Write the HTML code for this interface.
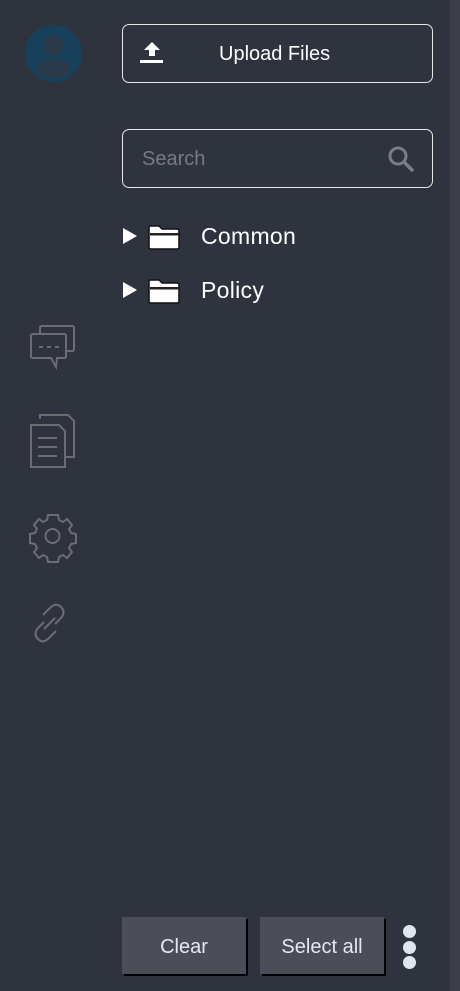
<!DOCTYPE html>
<html><head><style>
body{margin:0;width:460px;height:991px;background:#2f333e;position:relative;overflow:hidden;font-family:"Liberation Sans",sans-serif;color:#fff}
.sb{position:absolute;left:450px;top:0;width:10px;height:991px;background:#3c3f4a}
.box{position:absolute;left:122px;width:311px;border:1px solid #e6e6e6;border-radius:7px;box-sizing:border-box}
.btn{position:absolute;top:917px;width:124px;height:57px;background:#4b4d59;box-shadow:2px 2px 0 #000;color:#e6e8ef;font-size:20px;text-align:center;line-height:60px}
.dot{position:absolute;left:403px;width:13px;height:13px;border-radius:50%;background:#e1e5f0}
.row{position:absolute;font-size:23px;color:#fff;letter-spacing:0.3px}
</style></head><body>
<div class="sb"></div>
<svg style="position:absolute;left:25px;top:25px" width="57" height="57" viewBox="0 0 56 56">
<circle cx="28" cy="28" r="28" fill="#17415a"/>
<circle cx="28" cy="20" r="10" fill="#2b3a4a"/>
<path d="M11 45 Q14 33 28 33 Q42 33 45 45 Q37 52 28 52 Q19 52 11 45Z" fill="#2b3a4a"/>
</svg>
<div class="box" style="top:24px;height:59px"></div>
<svg style="position:absolute;left:139px;top:41px" width="26" height="24" viewBox="0 0 26 24"><path d="M13 1 L21 9 H16 V15 H10 V9 H5Z" fill="#fff"/><rect x="1" y="19" width="23" height="3" fill="#fff"/></svg>
<div style="position:absolute;left:219px;top:43px;font-size:20px">Upload Files</div>
<div class="box" style="top:129px;height:59px"></div>
<div style="position:absolute;left:142px;top:148px;font-size:20px;color:#777a82">Search</div>
<svg style="position:absolute;left:387px;top:145px" width="29" height="29" viewBox="0 0 29 29"><circle cx="11" cy="11" r="8" fill="none" stroke="#7a7d85" stroke-width="3"/><path d="M17 17 L26 26" stroke="#7a7d85" stroke-width="3.5"/></svg>
<svg style="position:absolute;left:122px;top:223px" width="60" height="30" viewBox="0 0 60 30"><path d="M1 5 L15 13 L1 21Z" fill="#fff"/><path d="M28 3 H37 L40 6 H55 Q57 6 57 8 V24 Q57 26 55 26 H29 Q27 26 27 24 V5 Q27 3 28 3Z" fill="#fff" stroke="#111" stroke-width="1.5"/><rect x="28" y="10" width="29" height="2.5" fill="#222"/></svg>
<div class="row" style="top:223px;left:201px">Common</div>
<svg style="position:absolute;left:122px;top:277px" width="60" height="30" viewBox="0 0 60 30"><path d="M1 5 L15 13 L1 21Z" fill="#fff"/><path d="M28 3 H37 L40 6 H55 Q57 6 57 8 V24 Q57 26 55 26 H29 Q27 26 27 24 V5 Q27 3 28 3Z" fill="#fff" stroke="#111" stroke-width="1.5"/><rect x="28" y="10" width="29" height="2.5" fill="#222"/></svg>
<div class="row" style="top:277px;left:201px">Policy</div>
<svg style="position:absolute;left:28px;top:322px" width="50" height="340" viewBox="28 322 50 340" fill="none" stroke="#6b6d72" stroke-width="2">
<path d="M40 333 V328 Q40 326 42 326 H72 Q74 326 74 328 V349 Q74 351 72 351 H67"/>
<path d="M33 334 H64 Q66 334 66 336 V356 Q66 358 64 358 H57 L56 367 L51 358 H33 Q31 358 31 356 V336 Q31 334 33 334Z"/>
<path d="M39 347 H43 M47 347 H51 M55 347 H59"/>
<path d="M40 419 V415 H68 L74 421 V457 H65"/>
<path d="M31 425 H59 L65 431 V467 H31Z"/>
<path d="M38 438 H57 M38 447 H57 M38 456 H57"/>
<path d="M48 515 h10 l1 5 4 2 4-3 5 6-3 4 2 4 5 1v9l-5 1-2 4 3 4-5 6-4-3-4 2-1 5H48l-1-5-4-2-4 3-5-6 3-4-2-4-5-1v-9l5-1 2-4-3-4 5-6 4 3 4-2z"/>
<circle cx="52.5" cy="536" r="7"/>
<path d="M44 622 L38 628 Q33 634 38 639 Q43 644 49 638 L56 631"/>
<path d="M55 624 L61 618 Q66 612 61 607 Q56 602 50 608 L43 615"/>
<path d="M44 629 L55 618"/>
</svg>
<div class="btn" style="left:122px">Clear</div>
<div class="btn" style="left:260px">Select all</div>
<div class="dot" style="top:925px"></div>
<div class="dot" style="top:941px"></div>
<div class="dot" style="top:956px"></div>
</body></html>
